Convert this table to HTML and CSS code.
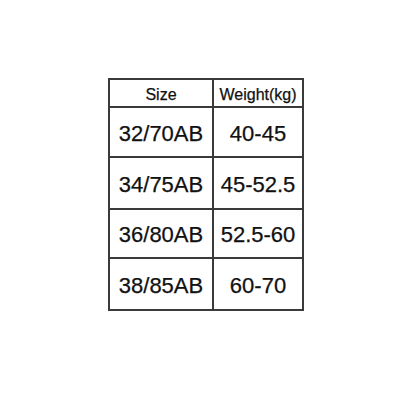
FILE: index.html
```html
<!DOCTYPE html>
<html>
<head>
<meta charset="utf-8">
<link rel="stylesheet" href="styles.css">
</head>
<body>
<div class="page">
  <table class="size-table">
    <tr class="head">
      <td class="c1">Size</td>
      <td class="c2">Weight(kg)</td>
    </tr>
    <tr class="r1"><td>32/70AB</td><td>40-45</td></tr>
    <tr class="r2"><td>34/75AB</td><td>45-52.5</td></tr>
    <tr class="r3"><td>36/80AB</td><td>52.5-60</td></tr>
    <tr class="r4"><td>38/85AB</td><td>60-70</td></tr>
  </table>
</div>
</body>
</html>
```
FILE: styles.css
```css
html, body {
  margin: 0;
  padding: 0;
  background: #ffffff;
}
.page {
  padding: 78px 0 0 108px;
}
.size-table {
  border-collapse: collapse;
  font-family: "Liberation Sans", Arial, sans-serif;
  color: #111;
}
.size-table td {
  border: 2px solid #3a3a3a;
  padding: 0;
  text-align: center;
  font-size: 22px;
  line-height: 1;
  padding-top: 3px;
  -webkit-text-stroke: 0.25px #111;
}
.size-table .c1 { width: 102px; }
.size-table .c2 { width: 88px; }
.head td {
  height: 23px;
  font-size: 16px;
  padding-top: 3px;
}
.r1 td { height: 45px; }
.r2 td { height: 47px; }
.r3 td { height: 44px; }
.r4 td { height: 47px; }
```
